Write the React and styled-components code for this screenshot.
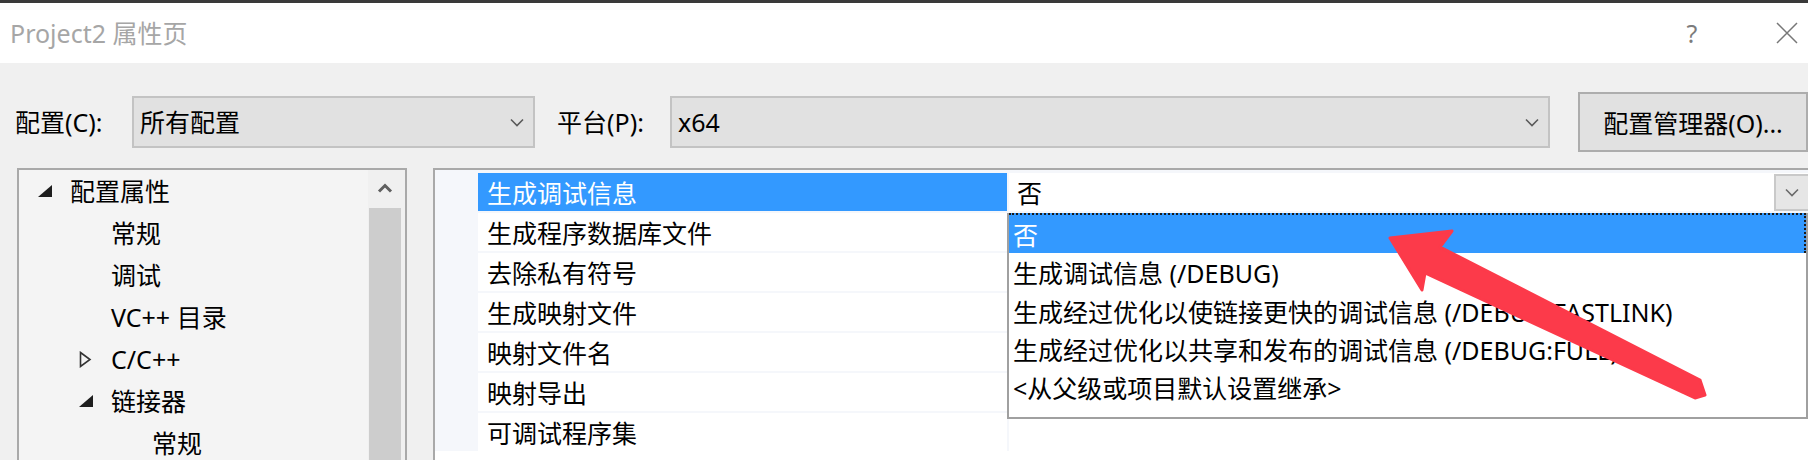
import styled, { createGlobalStyle } from "styled-components";

const GlobalStyle = createGlobalStyle`
  html, body {
    margin: 0;
    padding: 0;
  }
  body {
    width: 1808px;
    height: 460px;
    overflow: hidden;
    background: #f0f0f0;
    font-family: "Noto Sans", "Noto Sans CJK SC", sans-serif;
    color: #000;
  }
`;

const Window = styled.div`
  position: relative;
  width: 1808px;
  height: 460px;
  display: flex;
  flex-direction: column;
  background: #f0f0f0;
  overflow: hidden;
`;

const TitleBar = styled.div`
  height: 60px;
  border-top: 3px solid #3a3a3a;
  background: #fff;
  display: flex;
  align-items: center;
  padding-left: 10px;
`;

const Title = styled.div`
  flex: 1;
  font-size: 25px;
  line-height: 30px;
  color: #a6a6a6;
`;

const TitleButton = styled.div`
  width: 40px;
  height: 40px;
  display: flex;
  align-items: center;
  justify-content: center;
  margin-right: ${(p) => p.$mr}px;
  font-size: 25px;
  color: #7c7c7c;
`;

const Toolbar = styled.div`
  height: 105px;
  box-sizing: border-box;
  padding: 13px 0 0 15px;
  display: flex;
  align-items: center;
`;

const Label = styled.div`
  width: ${(p) => p.$w}px;
  margin-left: ${(p) => p.$ml || 0}px;
  font-size: 25px;
  line-height: 30px;
  white-space: nowrap;
`;

const Combo = styled.div`
  width: ${(p) => p.$w}px;
  height: 52px;
  box-sizing: border-box;
  border: 2px solid #c3c3c3;
  background: #e1e1e1;
  display: flex;
  align-items: center;
  justify-content: space-between;
  padding: 0 9px 0 6px;
  font-size: 25px;
  line-height: 30px;
`;

const Button = styled.div`
  width: 230px;
  height: 60px;
  margin-left: 28px;
  box-sizing: border-box;
  border: 2px solid #adadad;
  background: #e1e1e1;
  display: flex;
  align-items: center;
  justify-content: center;
  font-size: 25px;
  white-space: nowrap;
`;

const Body = styled.div`
  flex: 1;
  display: flex;
  gap: 26px;
  padding-left: 17px;
  min-height: 0;
`;

const LeftPanel = styled.div`
  width: 390px;
  box-sizing: border-box;
  border: 2px solid #a9a9a9;
  border-bottom: none;
  background: #f4f4f4;
  display: flex;
`;

const Tree = styled.div`
  flex: 1;
`;

const TreeRow = styled.div`
  height: 42px;
  display: flex;
  align-items: center;
  padding-left: ${(p) => 19 + p.$level * 41}px;
  font-size: 25px;
  line-height: 30px;
  white-space: nowrap;
`;

const Expander = styled.div`
  width: 32px;
  height: 42px;
  display: flex;
  align-items: center;
`;

const ScrollBar = styled.div`
  width: 37px;
  box-sizing: border-box;
  padding: 0 4px 0 1px;
  background: #f0f0f0;
  display: flex;
  flex-direction: column;
`;

const ScrollUp = styled.div`
  height: 36px;
  display: flex;
  align-items: center;
  justify-content: center;
`;

const Thumb = styled.div`
  flex: 1;
  margin-top: 2px;
  background: #cdcdcd;
`;

const RightPanel = styled.div`
  position: relative;
  flex: 1;
  border-left: 2px solid #a9a9a9;
  border-top: 2px solid #a9a9a9;
  background: #fff;
`;

const Grid = styled.div`
  padding: 3px 0 0 43px;
  background: #f5f7fb;
`;

const Row = styled.div`
  display: flex;
  gap: 2px;
  margin-bottom: 2px;
`;

const NameCell = styled.div`
  width: 529px;
  height: 38px;
  box-sizing: border-box;
  padding-left: 9px;
  display: flex;
  align-items: center;
  font-size: 25px;
  background: ${(p) => (p.$selected ? "#3399ff" : "#fff")};
  color: ${(p) => (p.$selected ? "#fff" : "#000")};
`;

const ValueCell = styled.div`
  flex: 1;
  height: 38px;
  display: flex;
  align-items: center;
  justify-content: space-between;
  padding-left: 8px;
  background: #fff;
  font-size: 25px;
`;

const DropButton = styled.div`
  width: 34px;
  height: 37px;
  box-sizing: border-box;
  border: 2px solid #c9c9c9;
  border-right: none;
  background: #e6e6e6;
  display: flex;
  align-items: center;
  justify-content: center;
`;

const DropList = styled.div`
  position: absolute;
  left: 572px;
  top: 43px;
  width: 801px;
  height: 206px;
  box-sizing: border-box;
  border: 2px solid #a0a0a0;
  border-top: none;
  background: #fff;
`;

const Option = styled.div`
  height: ${(p) => (p.$active ? 40 : 38.4)}px;
  box-sizing: border-box;
  padding-left: 4px;
  display: flex;
  align-items: center;
  font-size: 25px;
  white-space: nowrap;
  background: ${(p) => (p.$active ? "#3399ff" : "#fff")};
  color: ${(p) => (p.$active ? "#fff" : "#000")};
  border-top: ${(p) => (p.$active ? "2px dotted #1a1a1a" : "none")};
  border-right: ${(p) => (p.$active ? "2px dotted #1a1a1a" : "none")};
`;

const Overlay = styled.svg`
  position: absolute;
  left: 0;
  top: 0;
  pointer-events: none;
`;

const Chevron = ({ color = "#5a5a5a" }) => (
  <svg width="14" height="9" viewBox="0 0 14 9">
    <path d="M1 1.5 L7 7.5 L13 1.5" fill="none" stroke={color} strokeWidth="1.6" />
  </svg>
);

const UpChevron = () => (
  <svg width="16" height="10" viewBox="0 0 16 10">
    <path d="M2 8.5 L8 2.5 L14 8.5" fill="none" stroke="#606060" strokeWidth="3" />
  </svg>
);

const CloseIcon = () => (
  <svg width="22" height="22" viewBox="0 0 22 22">
    <path d="M1 1 L21 21 M21 1 L1 21" stroke="#777" strokeWidth="1.5" />
  </svg>
);

const Expanded = () => (
  <svg width="14" height="12" viewBox="0 0 14 12">
    <path d="M14 0 L14 12 L0 12 Z" fill="#1e1e1e" />
  </svg>
);

const Collapsed = () => (
  <svg width="13" height="17" viewBox="0 0 13 17">
    <path d="M1.5 1.5 L11 8.5 L1.5 15.5 Z" fill="none" stroke="#333" strokeWidth="1.6" />
  </svg>
);

const tree = [
  { level: 0, text: "配置属性", icon: "open" },
  { level: 1, text: "常规" },
  { level: 1, text: "调试" },
  { level: 1, text: "VC++ 目录" },
  { level: 1, text: "C/C++", icon: "closed" },
  { level: 1, text: "链接器", icon: "open" },
  { level: 2, text: "常规" },
];

const props = [
  "生成调试信息",
  "生成程序数据库文件",
  "去除私有符号",
  "生成映射文件",
  "映射文件名",
  "映射导出",
  "可调试程序集",
];

const options = [
  "否",
  "生成调试信息 (/DEBUG)",
  "生成经过优化以使链接更快的调试信息 (/DEBUG:FASTLINK)",
  "生成经过优化以共享和发布的调试信息 (/DEBUG:FULL)",
  "<从父级或项目默认设置继承>",
];

const App = () => {
  return (
    <Window>
      <GlobalStyle />
      <TitleBar>
        <Title>Project2 属性页</Title>
        <TitleButton $mr={55}>?</TitleButton>
        <TitleButton $mr={1}>
          <CloseIcon />
        </TitleButton>
      </TitleBar>

      <Toolbar>
        <Label $w={117}>配置(C):</Label>
        <Combo $w={403}>
          <span>所有配置</span>
          <Chevron />
        </Combo>
        <Label $w={113} $ml={22}>
          平台(P):
        </Label>
        <Combo $w={880}>
          <span>x64</span>
          <Chevron />
        </Combo>
        <Button>配置管理器(O)...</Button>
      </Toolbar>

      <Body>
        <LeftPanel>
          <Tree>
            {tree.map((item, i) => (
              <TreeRow key={i} $level={item.level}>
                <Expander>
                  {item.icon === "open" && <Expanded />}
                  {item.icon === "closed" && <Collapsed />}
                </Expander>
                {item.text}
              </TreeRow>
            ))}
          </Tree>
          <ScrollBar>
            <ScrollUp>
              <UpChevron />
            </ScrollUp>
            <Thumb />
          </ScrollBar>
        </LeftPanel>

        <RightPanel>
          <Grid>
            {props.map((name, i) => (
              <Row key={name}>
                <NameCell $selected={i === 0}>{name}</NameCell>
                <ValueCell>
                  {i === 0 && (
                    <>
                      <span>否</span>
                      <DropButton>
                        <Chevron color="#6a6a6a" />
                      </DropButton>
                    </>
                  )}
                </ValueCell>
              </Row>
            ))}
          </Grid>
          <DropList>
            {options.map((opt, i) => (
              <Option key={opt} $active={i === 0}>
                {opt}
              </Option>
            ))}
          </DropList>
        </RightPanel>
      </Body>

      <Overlay width="1808" height="460" viewBox="0 0 1808 460">
        <polygon
          points="1390,238 1452,231 1440,247 1700,380 1705,395 1695,398 1425,273 1422,290"
          fill="#fc3a4a"
          stroke="#fc3a4a"
          strokeWidth="3"
          strokeLinejoin="round"
        />
      </Overlay>
    </Window>
  );
};

export default App;
